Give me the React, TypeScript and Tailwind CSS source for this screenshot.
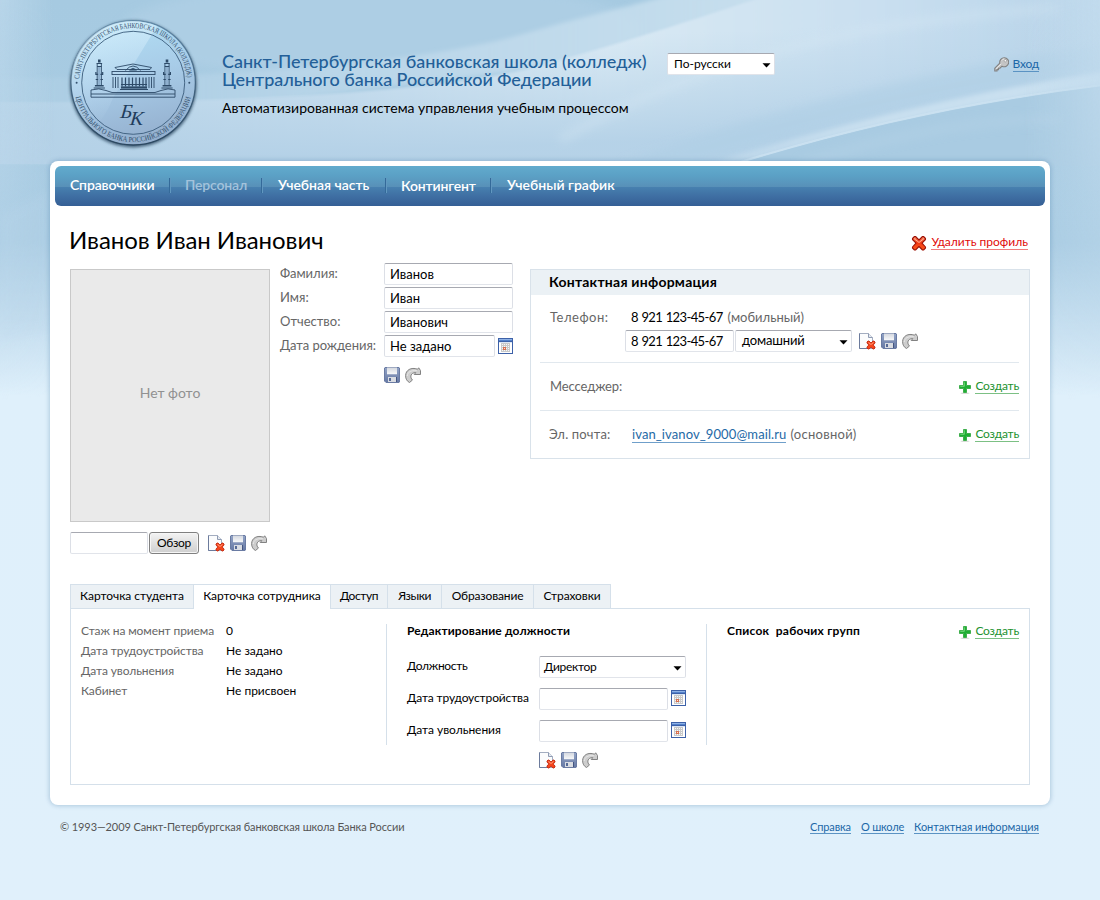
import type { ReactNode } from "react";

function Backdrop() {
  return (
    <svg className="absolute inset-0 -z-10" width="1100" height="900" viewBox="0 0 1100 900" aria-hidden="true">
      <defs>
        <linearGradient id="sky" x1="0" y1="0" x2="0" y2="1">
          <stop offset="0" stopColor="#a6cae1" />
          <stop offset="0.27" stopColor="#a9cce3" />
          <stop offset="0.36" stopColor="#c6dff0" />
          <stop offset="0.44" stopColor="#dff0fb" />
          <stop offset="1" stopColor="#e0f0fb" />
        </linearGradient>
        <linearGradient id="edge" x1="0" y1="0" x2="1" y2="0">
          <stop offset="0" stopColor="#c3dcee" stopOpacity="0.6" />
          <stop offset="0.05" stopColor="#c3dcee" stopOpacity="0" />
          <stop offset="0.93" stopColor="#c3dcee" stopOpacity="0" />
          <stop offset="1" stopColor="#c3dcee" stopOpacity="0.85" />
        </linearGradient>
        <linearGradient id="edgeFade" x1="0" y1="0" x2="0" y2="1">
          <stop offset="0" stopColor="#fff" />
          <stop offset="1" stopColor="#000" />
        </linearGradient>
        <mask id="edgeMask">
          <rect width="1100" height="400" fill="url(#edgeFade)" />
        </mask>
        <linearGradient id="mist" x1="0" y1="0" x2="1" y2="0">
          <stop offset="0" stopColor="#c5ddee" stopOpacity="0.1" />
          <stop offset="0.35" stopColor="#c5ddee" stopOpacity="0.45" />
          <stop offset="1" stopColor="#cbe1ef" stopOpacity="0.9" />
        </linearGradient>
        <linearGradient id="wave" x1="0" y1="0" x2="1" y2="0">
          <stop offset="0" stopColor="#c3dbed" stopOpacity="0.3" />
          <stop offset="0.2" stopColor="#cbe0f0" stopOpacity="0.85" />
          <stop offset="0.55" stopColor="#d9e9f4" />
          <stop offset="0.8" stopColor="#c9dff0" />
          <stop offset="1" stopColor="#b7d3e8" />
        </linearGradient>
        <linearGradient id="waveShade" x1="0" y1="0" x2="0.25" y2="1">
          <stop offset="0.35" stopColor="#b8d4e8" stopOpacity="0" />
          <stop offset="0.95" stopColor="#b4d1e7" stopOpacity="0.95" />
        </linearGradient>
        <linearGradient id="beam" x1="0" y1="0" x2="1" y2="0">
          <stop offset="0" stopColor="#d2e5f2" stopOpacity="0.2" />
          <stop offset="0.4" stopColor="#cbe1f0" stopOpacity="0.9" />
          <stop offset="1" stopColor="#c9e0f0" />
        </linearGradient>
        <filter id="soft" x="-10%" y="-30%" width="120%" height="160%">
          <feGaussianBlur stdDeviation="5" />
        </filter>
        <filter id="slight" x="-5%" y="-10%" width="110%" height="120%">
          <feGaussianBlur stdDeviation="0.8" />
        </filter>
        <filter id="medium" x="-5%" y="-20%" width="110%" height="140%">
          <feGaussianBlur stdDeviation="2.2" />
        </filter>
      </defs>
      <rect width="1100" height="900" fill="url(#sky)" />
      <ellipse cx="380" cy="30" rx="260" ry="50" fill="#b4d2e7" opacity="0.5" filter="url(#soft)" />
      <path d="M0 78 C250 78 430 62 530 32 C600 12 640 4 665 -4 L780 -4 L600 60 L200 110 L0 108Z" fill="url(#mist)" filter="url(#medium)" />
      <path d="M0 102 C250 104 440 92 540 66 C640 38 710 14 765 -4 L1104 -4 L1104 85 C980 100 850 128 735 164 L0 164Z" fill="url(#wave)" filter="url(#slight)" />
      <path d="M0 102 C250 104 440 92 540 66 C640 38 710 14 765 -4 L1104 -4 L1104 85 C980 100 850 128 735 164 L0 164Z" fill="url(#waveShade)" />
      <path d="M620 164 C760 110 930 72 1104 44 L1104 74 C960 96 820 126 700 164Z" fill="#afcfe5" opacity="0.6" filter="url(#soft)" />
      <path d="M560 140 C700 60 860 20 1060 8" stroke="#d8e9f4" strokeWidth="10" fill="none" opacity="0.3" filter="url(#soft)" />
      <path d="M715 162 C830 126 980 90 1104 72 L1104 85 C980 100 850 128 735 164Z" fill="url(#beam)" filter="url(#medium)" />
      <path d="M735 164 C850 128 980 100 1104 85" stroke="#cfe4f2" strokeWidth="2.5" fill="none" opacity="0.7" />
      <path d="M735 165 C850 129 980 101 1104 86 L1104 166Z" fill="#a9cbe2" />
      <path d="M800 165 C900 130 1000 118 1060 120" stroke="#b3d1e6" strokeWidth="8" fill="none" opacity="0.6" filter="url(#soft)" />
      <path d="M0 215 L50 190 L50 330 L0 340Z" fill="#bcd6ea" opacity="0.25" filter="url(#soft)" />
      <rect width="1100" height="400" fill="url(#edge)" mask="url(#edgeMask)" />
    </svg>
  );
}

function Column({ x }: { x: number }) {
  return (
    <g transform={`translate(${x} 0)`} fill="#2d4a68">
      <path d="M-1.3 59.500h2.600v3h-2.600zM-2.800 63h5.600v1h-5.600zM-2.200 66h4.400v1h-4.400zM-4 72h1.200v1.800h5.600v-1.800h1.200v3h-8zM-3.600 79h7.200v1h-7.200zM-4.400 85h8.800v1.500h-8.800zM-5.600 87.500h11.200v1h-11.200z" />
      <path d="M-2.100 64v22M2.100 64v22" stroke="#2d4a68" strokeWidth="0.9" />
      <path d="M-1.200 67h2.400v18h-2.400z" fill="#8fb0cf" />
    </g>
  );
}

function Logo() {
  return (
    <svg width="136" height="136" viewBox="65 16 136 136" role="img" aria-label="Эмблема банковской школы">
      <defs>
        <linearGradient id="disc" x1="0.35" y1="0" x2="0.6" y2="1">
          <stop offset="0" stopColor="#b2dff4" />
          <stop offset="0.45" stopColor="#a8cce8" />
          <stop offset="1" stopColor="#93aecd" />
        </linearGradient>
        <linearGradient id="gloss" x1="0" y1="0" x2="0.2" y2="1">
          <stop offset="0" stopColor="#e4f6ff" stopOpacity="0.65" />
          <stop offset="1" stopColor="#cfe9fb" stopOpacity="0.02" />
        </linearGradient>
        <linearGradient id="rim" x1="0" y1="0" x2="0" y2="1">
          <stop offset="0" stopColor="#5f87a6" />
          <stop offset="1" stopColor="#2b4760" />
        </linearGradient>
        <filter id="discShadow" x="-10%" y="-10%" width="120%" height="120%">
          <feGaussianBlur stdDeviation="1.5" />
        </filter>
        <path id="arcTop" d="M79.300 82 A54 54 0 0 1 187.300 82" />
        <path id="arcBottom" d="M75.400 96 A59.300 59.300 0 0 0 191 96" />
      </defs>
      <circle cx="133.200" cy="84" r="63.400" fill="#2b4760" opacity="0.8" filter="url(#discShadow)" />
      <circle cx="133.200" cy="82.800" r="62.200" fill="url(#disc)" stroke="url(#rim)" strokeWidth="1.3" />
      <path d="M74 62A62 62 0 0 1 157 26L113 98Q106 116 94 128A61 61 0 0 1 74 62Z" fill="url(#gloss)" />
      <circle cx="133.200" cy="82.800" r="51.500" fill="none" stroke="#3a5b7a" strokeWidth="0.9" />
      <g fill="#34516e" className="font-['Liberation_Serif',serif] text-[7.6px]">
        <text>
          <textPath href="#arcTop" startOffset="3" textLength="162" lengthAdjust="spacingAndGlyphs">САНКТ-ПЕТЕРБУРГСКАЯ БАНКОВСКАЯ ШКОЛА (КОЛЛЕДЖ)</textPath>
        </text>
        <text>
          <textPath href="#arcBottom" startOffset="1" textLength="157" lengthAdjust="spacingAndGlyphs">ЦЕНТРАЛЬНОГО БАНКА РОССИЙСКОЙ ФЕДЕРАЦИИ</textPath>
        </text>
      </g>
      <circle cx="76.600" cy="82.800" r="1" fill="#34516e" />
      <circle cx="189.300" cy="82.800" r="1" fill="#34516e" />
      <Column x={99.300} />
      <Column x={167} />
      <g stroke="#2d4a68" fill="none" strokeWidth="0.9">
        <path d="M115 67.500L133 64L151.500 67.500L150 69.500H117ZM125.500 70.500q7.500-9 15 0" />
        <path d="M112 71.500h43M112 74.500h43M112 71v4M155 71v4M113 77v11M115.500 77v11M118 77v11M149 77v11M151.500 77v11M154 77v11" />
        <path d="M122 77.500v9M125.500 77.500v9M129 77.500v9M132.500 77.500v9M136 77.500v9M139.500 77.500v9M143 77.500v9M146 77.500v9" strokeWidth="1.2" />
        <path d="M121 84.500h26M120 89.500h28" strokeWidth="1" />
        <path d="M121 87.500h26" strokeWidth="2.200" />
        <path d="M91 90Q99 87.500 106 90.500L112 92.500H155L161 90.500Q168 87.500 175 90V97.200H91ZM91 94H175" />
      </g>
      <path d="M129 70.500q4-5 8 0z" fill="#2d4a68" />
      <g transform="translate(120 118) skewX(-6)">
        <text fill="#1f3d5c" className="font-['Liberation_Serif',serif] text-[20px] italic">
          Б<tspan dx="-1.5" dy="6.5">К</tspan>
        </text>
      </g>
    </svg>
  );
}

function KeyIcon() {
  return (
    <svg width="15" height="15" viewBox="0 0 15 15" className="shrink-0" aria-hidden="true">
      <path d="M5.800 6.200L0.800 11.200V14H3v-1.400h1.500v-1.400h1.500L8 9.200A4.500 4.500 0 1 0 5.800 6.200Z" fill="#c4c4c4" stroke="#808080" strokeWidth="1.1" />
      <path d="M7.200 6.800L2 11.800M7.800 3.500q1-1.500 2.500-1.700" stroke="#eee" strokeWidth="0.9" fill="none" />
      <circle cx="11.300" cy="3.700" r="1.200" fill="#fff" stroke="#888" strokeWidth="0.6" />
    </svg>
  );
}

function CrossIcon() {
  return (
    <svg width="16" height="16" viewBox="0 0 16 16" className="shrink-0" aria-hidden="true">
      <defs>
        <linearGradient id="crossFill" x1="0" y1="0" x2="0" y2="1">
          <stop offset="0" stopColor="#ff8a66" />
          <stop offset="0.5" stopColor="#f23a14" />
          <stop offset="1" stopColor="#ff5a1c" />
        </linearGradient>
      </defs>
      <path d="M3.500 1.500H4.500L8 5L11.500 1.500H12.500L14.500 3.500V4.500L11 8.200L14.500 12V13L12.500 15H11.500L8 11.500L4.500 15H3.500L1.500 13V12L5 8.200L1.500 4.500V3.500Z" fill="url(#crossFill)" stroke="#9c1206" strokeWidth="1.100" strokeLinejoin="round" />
      <path d="M3 3.500L8 7.500L13 3.500" fill="none" stroke="#ffb49c" strokeWidth="0.9" />
    </svg>
  );
}

function PlusIcon() {
  return (
    <svg width="12" height="13" viewBox="0 0 12 13" className="shrink-0" aria-hidden="true">
      <ellipse cx="6" cy="12.200" rx="4.500" ry="0.700" fill="#d5dad5" />
      <path d="M4.500 0.500h3v4h4v3h-4v4h-3v-4h-4v-3h4z" fill="#1fae34" stroke="#3fae4c" strokeWidth="1" strokeLinejoin="round" />
      <path d="M5.300 1.300v4h-4" fill="none" stroke="#7fdc83" strokeWidth="0.9" />
    </svg>
  );
}

function CalendarIcon() {
  return (
    <svg width="15" height="16" viewBox="0 0 15 16" className="shrink-0" shapeRendering="crispEdges" aria-hidden="true">
      <path d="M0 0h15v16H0z" fill="#3d61a8" />
      <path d="M1 1h13v1H1z" fill="#8fb2e6" />
      <path d="M1 2h13v1H1z" fill="#5482cb" />
      <path d="M1 4h13v11H1z" fill="#fff" />
      <path d="M1 4h13v1H1z" fill="#dbe6f5" />
      <path d="M3 5h9v9H3z" fill="#c9c9c9" />
      <path d="M4 6h1v1h-1zM6 6h1v1h-1zM8 6h1v1h-1zM10 6h1v1h-1zM4 8h1v1h-1zM6 8h1v1h-1zM8 8h1v1h-1zM10 8h1v1h-1zM4 10h1v1h-1zM8 10h1v1h-1zM10 10h1v1h-1zM4 12h1v1h-1zM6 12h1v1h-1zM8 12h1v1h-1zM10 12h1v1h-1z" fill="#f8f8f8" />
      <path d="M5 9h3v3H5z" fill="#d9704f" />
      <path d="M6 10h1v1h-1z" fill="#ffe1d6" />
    </svg>
  );
}

function SaveIcon() {
  return (
    <svg width="16" height="16" viewBox="0 0 16 16" className="shrink-0" aria-hidden="true">
      <defs>
        <linearGradient id="disk" x1="0" y1="0" x2="0" y2="1">
          <stop offset="0" stopColor="#93a4c6" />
          <stop offset="1" stopColor="#6679a5" />
        </linearGradient>
        <linearGradient id="diskLabel" x1="0" y1="0" x2="0" y2="1">
          <stop offset="0" stopColor="#d3d7df" />
          <stop offset="1" stopColor="#f9fafb" />
        </linearGradient>
      </defs>
      <path d="M1 0.500H15L15.500 1V15L15 15.500H2L0.500 14V1Z" fill="url(#disk)" stroke="#6a7ba3" />
      <path d="M3 0.500h10v7H3z" fill="url(#diskLabel)" />
      <path d="M3 8h10" stroke="#8392b6" />
      <path d="M4 10h8v5H4z" fill="#d9dce2" />
      <path d="M5 11h2v3H5z" fill="#566a97" />
      <path d="M12.500 10v5" stroke="#44557f" />
    </svg>
  );
}

function UndoIcon() {
  return (
    <svg width="17" height="17" viewBox="0 0 17 17" className="shrink-0" aria-hidden="true">
      <path d="M4.500 15.500L7.500 13C5 10.800 5.200 6.800 9 5.800Q10 5.500 10.800 5.600L9.200 7.500H15.500V3.500L13.700 0.800L12.600 2.200C6 -0.200 0.600 3.200 0.600 8.700C0.600 11.800 2 14.300 4.500 15.500Z" fill="#cdcdcd" stroke="#828282" strokeWidth="1" strokeLinejoin="round" />
      <path d="M2.300 9C2.400 5.500 5.500 3 12 3.700" fill="none" stroke="#ececec" strokeWidth="0.8" />
    </svg>
  );
}

function DocDeleteIcon() {
  return (
    <svg width="17" height="17" viewBox="0 0 17 17" className="shrink-0" aria-hidden="true">
      <path d="M0.500 0.500H9.500L13.500 4.500V15.500H0.500Z" fill="#fbfcfd" stroke="#a3adc0" />
      <path d="M0.500 0.500V15.500H8.500" stroke="#6c7b9c" fill="none" />
      <path d="M9.500 0.500V4.500H13.500" fill="#e7ebf1" stroke="#8f9bb3" />
      <path d="M9 8H10L12 10L14 8H15L16 9V10L14.200 12L16 14V15L15 16H14L12 14.200L10 16H9L8 15V14L9.800 12L8 10V9Z" fill="#f5451c" stroke="#c22a12" strokeWidth="0.900" />
      <path d="M9.500 9.500L12 11.500L14.500 9.500" stroke="#ffa888" strokeWidth="0.900" fill="none" />
    </svg>
  );
}

function Actions({ remove = true }: { remove?: boolean }) {
  return (
    <div className="flex h-4 items-start">
      {remove && (
        <button type="button" aria-label="Удалить" className="mr-[5px]">
          <DocDeleteIcon />
        </button>
      )}
      <button type="button" aria-label="Сохранить" className="mr-[5px]">
        <SaveIcon />
      </button>
      <button type="button" aria-label="Отменить">
        <UndoIcon />
      </button>
    </div>
  );
}

const fieldLook =
  "h-[22px] rounded-[2px] border border-x-[#dcdfe6] border-t-[#a7a9b1] border-b-[#e1e4ea] bg-white text-black outline-none";

function Field({ value = "", className }: { value?: string; className: string }) {
  return <input defaultValue={value} className={`${fieldLook} px-[5px] pb-px text-[13px] ${className}`} />;
}

function Dropdown({ children, className }: { children: ReactNode; className: string }) {
  return (
    <button type="button" className={`${fieldLook} flex items-center justify-between pr-[3px] ${className}`}>
      {children}
      <svg width="9" height="5" viewBox="0 0 9 5" className="mt-0.5" aria-hidden="true">
        <path d="M0.500 0.300h8L4.500 4.600z" fill="#000" />
      </svg>
    </button>
  );
}

function CreateLink() {
  return (
    <a href="#" className="flex items-center text-xs leading-[14px] tracking-[-0.2px] text-[#22912e]">
      <span className="mt-[2px] mr-1">
        <PlusIcon />
      </span>
      <span className="border-b border-[#7cc084]">Создать</span>
    </a>
  );
}

const menu = [
  { label: "Справочники", look: "w-[99px]" },
  { label: "Персонал", look: "w-[90px] pl-[14px] text-[#a3c3dc]" },
  { label: "Учебная часть", look: "w-[122px] pl-[15px] tracking-[-0.02px]" },
  { label: "Контингент", look: "w-[103px] pt-[2px] pl-[14px]" },
  { label: "Учебный график", look: "pl-[15px] tracking-[0.02px]" },
];

function Nav() {
  return (
    <nav className="flex h-10 items-center rounded-md bg-[linear-gradient(#61abcd_0%,#5ba0c5_25%,#5890b8_52%,#4780af_53%,#3f6fa3_75%,#355f95_100%)] pb-[2px] pl-[15px] text-sm font-semibold whitespace-nowrap tracking-[-0.15px] text-white">
      {menu.map((m, i) => (
        <div key={m.label} className="flex items-center">
          {i > 0 && <div className="h-[15px] w-[2px] border-l border-[#346a99] bg-[#6198c0]" />}
          <a href="#" className={`leading-[18px] ${m.look}`}>
            {m.label}
          </a>
        </div>
      ))}
    </nav>
  );
}

function Person() {
  const label = "w-[104px] text-[13px] text-[#666]";
  return (
    <div className="flex flex-col gap-[2px]">
      <label className="flex items-center">
        <span className={label}>Фамилия:</span>
        <Field value="Иванов" className="w-[129px]" />
      </label>
      <label className="flex items-center">
        <span className={label}>Имя:</span>
        <Field value="Иван" className="w-[129px]" />
      </label>
      <label className="flex items-center">
        <span className={label}>Отчество:</span>
        <Field value="Иванович" className="w-[129px]" />
      </label>
      <div className="flex items-center">
        <span className={`${label} tracking-[-0.05px]`}>Дата рождения:</span>
        <Field value="Не задано" className="mr-[3px] w-[111px]" />
        <CalendarIcon />
      </div>
      <div className="mt-2 ml-[104px]">
        <Actions remove={false} />
      </div>
    </div>
  );
}

function Contacts() {
  const digits = "tracking-[-0.62px] [word-spacing:0.8px]";
  return (
    <section className="mt-[6px] h-[190px] w-[500px] border border-[#d9e2ea]">
      <h2 className="h-[25px] bg-[#ebf1f5] pl-[18px] text-sm leading-[24px] font-bold tracking-[0.23px]">Контактная информация</h2>
      <div className="pr-[10px] pl-[9px] text-[13px] text-[#666]">
        <div className="flex h-[68px] border-b border-[#e1e8ee] pt-3 pl-[10px]">
          <div className="w-[75px] leading-5 tracking-[0.5px]">Телефон:</div>
          <div>
            <div className="pl-[6px] leading-5">
              <span className={`text-black ${digits}`}>8 921 123-45-67</span>
              <span className="ml-[5px]">(мобильный)</span>
            </div>
            <div className="mt-[3px] flex items-center">
              <Field value="8 921 123-45-67" className={`w-[109px] ${digits}`} />
              <Dropdown className="ml-px w-[117px] pl-[6px] text-[13px] tracking-[-0.15px]">домашний</Dropdown>
              <div className="ml-[7px]">
                <Actions />
              </div>
            </div>
          </div>
        </div>
        <div className="flex h-12 items-center justify-between border-b border-[#e1e8ee] pl-[10px]">
          <span className="tracking-[-0.1px]">Месседжер:</span>
          <CreateLink />
        </div>
        <div className="flex h-12 items-center pb-px pl-[9px]">
          <span className="w-[83px] tracking-[0.16px]">Эл. почта:</span>
          <a href="#" className="border-b border-[#6f9fca] leading-[15px] tracking-[0.1px] text-[#1e69a6]">
            ivan_ivanov_9000@mail.ru
          </a>
          <span className="ml-1 tracking-[0.28px]">(основной)</span>
          <div className="ml-auto">
            <CreateLink />
          </div>
        </div>
      </div>
    </section>
  );
}

const tabs = [
  { label: "Карточка студента", look: "w-[122px] tracking-[-0.02px]" },
  { label: "Карточка сотрудника", look: "w-[136px] tracking-[-0.03px]" },
  { label: "Доступ", look: "w-[56px] tracking-[-0.4px]" },
  { label: "Языки", look: "w-[53px] tracking-[-0.45px]" },
  { label: "Образование", look: "w-[91px] tracking-[-0.15px]" },
  { label: "Страховки", look: "w-[76px] tracking-[-0.1px]" },
];

const facts = [
  ["Стаж на момент приема", "0"],
  ["Дата трудоустройства", "Не задано"],
  ["Дата увольнения", "Не задано"],
  ["Кабинет", "Не присвоен"],
];

function Cards() {
  return (
    <section className="mt-[30px] text-xs">
      <div className="relative z-10 -mb-px flex">
        {tabs.map((t, i) => (
          <a
            key={t.label}
            href="#"
            className={`box-content border-t border-l border-[#d5e0ea] text-center leading-[22px] whitespace-nowrap last:border-r ${t.look} ${i === 1 ? "h-6 bg-white" : "h-[23px] border-b bg-[#ecf1f5]"}`}
          >
            {t.label}
          </a>
        ))}
      </div>
      <div className="flex h-[177px] border border-[#d5e0ea] pt-[15px] pl-[10px]">
        <dl className="grid h-20 w-[305px] grid-cols-[145px_1fr] leading-[14px]">
          {facts.map(([k, v]) => (
            <div key={k} className="contents">
              <dt className="tracking-[-0.1px] text-[#666]">{k}</dt>
              <dd>{v}</dd>
            </div>
          ))}
        </dl>
        <div className="h-[121px] w-[321px] border-x border-[#d5e0ea] pl-5">
          <h3 className="leading-[14px] font-bold tracking-[0.14px]">Редактирование должности</h3>
          <div className="mt-[18px] flex items-center">
            <span className="w-[132px] pb-[2px] tracking-[-0.32px]">Должность</span>
            <Dropdown className="w-[147px] pl-[4px] tracking-[-0.3px]">Директор</Dropdown>
          </div>
          <div className="mt-[10px] flex items-center">
            <span className="w-[132px] pb-[2px] tracking-[-0.13px]">Дата трудоустройства</span>
            <Field className="mr-[3px] w-[129px]" />
            <span className="-mt-[2px]">
              <CalendarIcon />
            </span>
          </div>
          <div className="mt-[10px] flex items-center">
            <span className="w-[132px] pb-[2px] tracking-[-0.04px]">Дата увольнения</span>
            <Field className="mr-[3px] w-[129px]" />
            <span className="-mt-[2px]">
              <CalendarIcon />
            </span>
          </div>
          <div className="mt-[10px] ml-[132px]">
            <Actions />
          </div>
        </div>
        <div className="flex w-[312px] items-start justify-between pl-5">
          <h3 className="leading-[14px] font-bold tracking-[0.26px] whitespace-pre">Список  рабочих групп</h3>
          <CreateLink />
        </div>
      </div>
    </section>
  );
}

export default function App() {
  return (
    <div className="relative isolate h-[900px] w-[1100px] overflow-hidden font-['Lato',sans-serif] text-black">
      <Backdrop />
      <header className="flex h-[161px] pt-4 pr-[61px] pl-[65px]">
        <Logo />
        <div className="mt-9 ml-[21px] w-[426px] whitespace-nowrap">
          <h1 className="text-lg leading-[18px] font-medium text-[#235f98]">
            <span className="block tracking-[-0.02px]">Санкт-Петербургская банковская школа (колледж)</span>
            <span className="block tracking-[-0.06px]">Центрального банка Российской Федерации</span>
          </h1>
          <p className="mt-[11px] text-sm leading-[18px]">Автоматизированная система управления учебным процессом</p>
        </div>
        <div className="mt-[37px] ml-[19px]">
          <Dropdown className="w-[108px] pl-[6px] text-xs">По-русски</Dropdown>
        </div>
        <a href="#" className="mt-[41px] ml-auto flex h-[15px] items-center gap-1 text-xs leading-[14px] tracking-[-0.2px] text-[#1b67a7]">
          <KeyIcon />
          <span className="border-b border-[#5b93c3]">Вход</span>
        </a>
      </header>
      <main className="mx-auto h-[644px] w-[1000px] rounded-lg bg-white p-[5px] shadow-[0_0_4px_1px_rgba(70,120,165,0.32)]">
        <Nav />
        <div className="px-[15px]">
          <div className="mt-[19px] flex h-[30px] items-center justify-between">
            <h1 className="-ml-px text-2xl leading-[30px] tracking-[-0.08px]">Иванов Иван Иванович</h1>
            <a href="#" className="mt-[5px] mr-[2px] flex items-center gap-1 text-xs leading-[14px] text-[#df0a0a]">
              <CrossIcon />
              <span className="border-b border-[#f07c7c]">Удалить профиль</span>
            </a>
          </div>
          <div className="mt-2 flex h-[291px] items-start">
            <div className="mt-[6px] mr-[10px] w-[200px]">
              <div className="flex h-[253px] items-center justify-center border border-[#c9c9c9] bg-[#eaeaea] pb-[6px] text-sm text-[#919191]">Нет фото</div>
              <div className="mt-[10px] flex items-center">
                <Field className="w-[78px]" />
                <button type="button" className="mr-[9px] ml-px h-[22px] w-[50px] rounded-[3px] border border-[#808080] bg-gradient-to-b from-[#f3f3f3] to-[#cfcfcf] text-xs tracking-[-0.3px] shadow-[inset_0_0_0_1px_#f6f6f6]">
                  Обзор
                </button>
                <Actions />
              </div>
            </div>
            <Person />
            <div className="ml-auto">
              <Contacts />
            </div>
          </div>
          <Cards />
        </div>
      </main>
      <footer className="flex justify-between pt-[15px] pr-[61px] pl-[60px] text-[11px] leading-[13px]">
        <span className="tracking-[-0.09px] text-[#555]">© 1993—2009 Санкт-Петербургская банковская школа Банка России</span>
        <div className="flex gap-[10px] text-[#1b67a7]">
          <a href="#" className="border-b border-[#5b93c3] tracking-[-0.12px]">Справка</a>
          <a href="#" className="border-b border-[#5b93c3] tracking-[-0.2px]">О школе</a>
          <a href="#" className="border-b border-[#5b93c3] tracking-[-0.04px]">Контактная информация</a>
        </div>
      </footer>
    </div>
  );
}
